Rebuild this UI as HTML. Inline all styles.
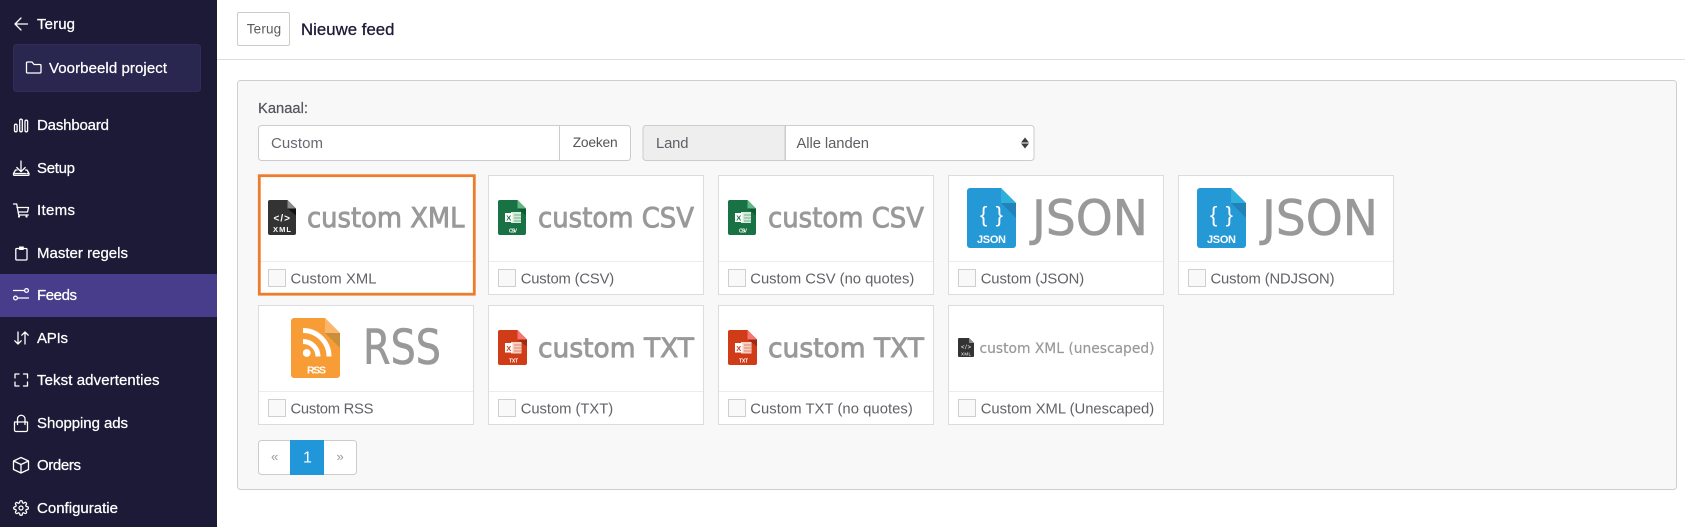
<!DOCTYPE html>
<html lang="nl">
<head>
<meta charset="utf-8">
<title>Nieuwe feed</title>
<style>
html,body{margin:0;padding:0;width:1685px;height:527px;overflow:hidden;background:#fff}
svg{display:block;font-family:"Liberation Sans",sans-serif}
.nav{font-size:15px;fill:#fff;stroke:#fff;stroke-width:.25}
.ic{fill:none;stroke:#fff;stroke-width:1.3;stroke-linecap:round;stroke-linejoin:round}
.lbl{font-size:14.8px;fill:#626268}
.card{fill:#fff;stroke:#dcdcdc;stroke-width:1}
.div{stroke:#ececec;stroke-width:1}
.cb{fill:#f9f9f9;stroke:#cfcfcf;stroke-width:1}
.logo{font-family:"DejaVu Sans",sans-serif;fill:#999;stroke:#999;stroke-width:.85}
.big{font-family:"DejaVu Sans",sans-serif;fill:#999;stroke:#999;stroke-width:.6}
.sm{font-family:"DejaVu Sans",sans-serif;fill:#999;stroke:#999;stroke-width:.2}
.w{fill:#fff;font-weight:bold}
</style>
</head>
<body>
<svg width="1685" height="527" viewBox="0 0 1685 527" xmlns="http://www.w3.org/2000/svg">
<rect width="1685" height="527" fill="#fff"/>

<!-- sidebar -->
<rect width="217" height="527" fill="#1c1a37"/>
<rect x="13.5" y="44.5" width="187" height="47" rx="3" fill="#29264f" stroke="#2f2c59"/>
<rect y="274" width="217" height="43" fill="#483d8b"/>

<path class="ic" d="M27.5 24H15M21 18l-6 6 6 6"/>
<text class="nav" x="37" y="29" textLength="38">Terug</text>
<path class="ic" d="M26.5 63a1 1 0 0 1 1-1h4.5l2 2.5h6a1 1 0 0 1 1 1V72a1 1 0 0 1-1 1h-12.500a1 1 0 0 1-1-1z"/>
<text class="nav" x="49" y="73" textLength="118">Voorbeeld project</text>

<path class="ic" d="M14.500 125.500a1.300 1.300 0 0 1 2.600 0v5a1.300 1.300 0 0 1-2.600 0zM19.700 120.500a1.300 1.300 0 0 1 2.600 0v10a1.300 1.300 0 0 1-2.600 0zM25 121.500a1.300 1.300 0 0 1 2.600 0v9a1.300 1.300 0 0 1-2.600 0z"/>
<text class="nav" x="37" y="130" textLength="72">Dashboard</text>

<path class="ic" d="M21 161v10.500M16.800 167.500l4.200 4.200 4.200-4.200M17 170h-1.500l-2 3.500v1a.8.8 0 0 0 .8.8h13.900a.8.8 0 0 0 .8-.8v-1l-2-3.500H25.500M14 173.500h11.500M27 173.500h1"/>
<text class="nav" x="37" y="173" textLength="38">Setup</text>

<path class="ic" d="M13.500 204h3.200l2 11h9.500M17 207.500h11.500l-1 4.500H18"/>
<circle cx="19" cy="216.500" r="1.100" fill="#fff"/><circle cx="26.500" cy="216.500" r="1.100" fill="#fff"/>
<text class="nav" x="37" y="215" textLength="38">Items</text>

<path class="ic" d="M19 248.500h-2.200a1 1 0 0 0-1 1V259a1 1 0 0 0 1 1H26a1 1 0 0 0 1-1v-9.500a1 1 0 0 0-1-1h-2.200"/>
<rect x="19" y="246.500" width="4.800" height="3.500" rx=".5" fill="#fff"/>
<text class="nav" x="37" y="258" textLength="91">Master regels</text>

<path class="ic" d="M13.500 290.500h10.500M18 298h10.500"/>
<circle class="ic" cx="26.500" cy="290.500" r="1.900"/><circle class="ic" cx="15.500" cy="298" r="1.900"/>
<text class="nav" x="37" y="300" textLength="40">Feeds</text>

<path class="ic" d="M18 332v12M14.800 340.800l3.200 3.200 3.200-3.200M25 344v-12M21.800 335.200l3.200-3.200 3.200 3.200"/>
<text class="nav" x="37" y="343" textLength="31">APIs</text>

<path class="ic" stroke-linecap="butt" d="M15 378v-4h4M23.500 374h4v4M27.500 382v4h-4M19 386h-4v-4"/>
<text class="nav" x="37" y="385" textLength="122.500">Tekst advertenties</text>

<path class="ic" d="M15 422h12.500v8a1.500 1.500 0 0 1-1.500 1.500H16a1.500 1.500 0 0 1-1.500-1.500v-8M17.500 424.500V419a3.700 3.700 0 0 1 7.500 0v5.500"/>
<text class="nav" x="37" y="428" textLength="91">Shopping ads</text>

<path class="ic" d="M21 457.500l7.500 3.500v8.500l-7.500 3.500-7.500-3.500V461zM13.500 461l7.500 3.500 7.500-3.500M21 464.500V473"/>
<text class="nav" x="37" y="470" textLength="44">Orders</text>

<g transform="translate(13 500) scale(.667)" fill="none" stroke="#fff" stroke-width="1.900" stroke-linecap="round" stroke-linejoin="round">
<circle cx="12" cy="12" r="3"/>
<path d="M19.400 15a1.650 1.650 0 0 0 .33 1.820l.06.06a2 2 0 0 1 0 2.830 2 2 0 0 1-2.830 0l-.06-.06a1.650 1.650 0 0 0-1.820-.33 1.650 1.650 0 0 0-1 1.510V21a2 2 0 0 1-2 2 2 2 0 0 1-2-2v-.09A1.650 1.650 0 0 0 9 19.400a1.650 1.650 0 0 0-1.820.33l-.06.06a2 2 0 0 1-2.830 0 2 2 0 0 1 0-2.830l.06-.06a1.650 1.650 0 0 0 .33-1.820 1.650 1.650 0 0 0-1.510-1H3a2 2 0 0 1-2-2 2 2 0 0 1 2-2h.09A1.650 1.650 0 0 0 4.600 9a1.650 1.650 0 0 0-.33-1.820l-.06-.06a2 2 0 0 1 0-2.830 2 2 0 0 1 2.830 0l.06.06a1.650 1.650 0 0 0 1.820.33H9a1.650 1.650 0 0 0 1-1.510V3a2 2 0 0 1 2-2 2 2 0 0 1 2 2v.09a1.650 1.650 0 0 0 1 1.510 1.650 1.650 0 0 0 1.820-.33l.06-.06a2 2 0 0 1 2.830 0 2 2 0 0 1 0 2.830l-.06.06a1.650 1.650 0 0 0-.33 1.820V9a1.650 1.650 0 0 0 1.510 1H21a2 2 0 0 1 2 2 2 2 0 0 1-2 2h-.09a1.650 1.650 0 0 0-1.510 1z"/>
</g>
<text class="nav" x="37" y="513" textLength="81">Configuratie</text>

<!-- header -->
<rect x="217" y="59" width="1468" height="1" fill="#dedede"/>
<rect x="237.500" y="12.500" width="52" height="33" rx="1.500" fill="#fff" stroke="#ccc"/>
<text x="246.700" y="33.500" font-size="13.500" fill="#5b5b5b" textLength="34.500">Terug</text>
<text x="301" y="35" font-size="16.800" fill="#1c1a37" stroke="#1c1a37" stroke-width=".3" textLength="93.500">Nieuwe feed</text>

<!-- panel -->
<rect x="237.500" y="80.500" width="1439" height="409" rx="3" fill="#f8f8f8" stroke="#cfcfcf"/>
<text x="258" y="113" font-size="14.700" fill="#55555c" stroke="#55555c" stroke-width=".25" textLength="50">Kanaal:</text>

<rect x="258.500" y="125.500" width="372" height="35" rx="3" fill="#fff" stroke="#ccc"/>
<rect x="559" y="126" width="1" height="34" fill="#ccc"/>
<text x="271" y="148" font-size="15" fill="#666a70" textLength="52">Custom</text>
<text x="572.700" y="147" font-size="13.800" fill="#555" textLength="45">Zoeken</text>

<path d="M785 125.500H646a3 3 0 0 0-3 3v29a3 3 0 0 0 3 3h139z" fill="#eee" stroke="#ccc"/>
<path d="M785.500 125.500H1031a3 3 0 0 1 3 3v29a3 3 0 0 1-3 3H785.500z" fill="#fff" stroke="#ccc"/>
<text x="656" y="148" font-size="14.800" fill="#5e5e64" textLength="32.500">Land</text>
<text x="796.500" y="148" font-size="14.800" fill="#5e5e64" textLength="72.500">Alle landen</text>
<path d="M1025 137.500l4 5h-8zM1021 143.500h8l-4 5z" fill="#3c3c3c"/>

<!-- cards row 1 -->
<rect class="card" x="258.500" y="175.500" width="216" height="119"/>
<path class="div" d="M259 261.500h215"/>
<rect class="card" x="488.500" y="175.500" width="215" height="119"/><path class="div" d="M489 261.500h214"/>
<rect class="card" x="718.500" y="175.500" width="215" height="119"/><path class="div" d="M719 261.500h214"/>
<rect class="card" x="948.500" y="175.500" width="215" height="119"/><path class="div" d="M949 261.500h214"/>
<rect class="card" x="1178.500" y="175.500" width="215" height="119"/><path class="div" d="M1179 261.500h214"/>

<rect class="cb" x="268.500" y="269.500" width="17" height="17"/>
<rect class="cb" x="498.500" y="269.500" width="17" height="17"/>
<rect class="cb" x="728.500" y="269.500" width="17" height="17"/>
<rect class="cb" x="958.500" y="269.500" width="17" height="17"/>
<rect class="cb" x="1188.500" y="269.500" width="17" height="17"/>

<text class="lbl" x="290.500" y="283.500" textLength="86">Custom XML</text>
<text class="lbl" x="520.700" y="283.500" textLength="93.500">Custom (CSV)</text>
<text class="lbl" x="750.300" y="283.500" textLength="164">Custom CSV (no quotes)</text>
<text class="lbl" x="980.700" y="283.500" textLength="103.500">Custom (JSON)</text>
<text class="lbl" x="1210.500" y="283.500" textLength="124">Custom (NDJSON)</text>

<!-- cards row 2 -->
<rect class="card" x="258.500" y="305.500" width="215" height="119"/><path class="div" d="M259 391.500h214"/>
<rect class="card" x="488.500" y="305.500" width="215" height="119"/><path class="div" d="M489 391.500h214"/>
<rect class="card" x="718.500" y="305.500" width="215" height="119"/><path class="div" d="M719 391.500h214"/>
<rect class="card" x="948.500" y="305.500" width="215" height="119"/><path class="div" d="M949 391.500h214"/>

<rect class="cb" x="268.500" y="399.500" width="17" height="17"/>
<rect class="cb" x="498.500" y="399.500" width="17" height="17"/>
<rect class="cb" x="728.500" y="399.500" width="17" height="17"/>
<rect class="cb" x="958.500" y="399.500" width="17" height="17"/>

<text class="lbl" x="290.500" y="413.500" textLength="83">Custom RSS</text>
<text class="lbl" x="520.700" y="413.500" textLength="92.500">Custom (TXT)</text>
<text class="lbl" x="750.300" y="413.500" textLength="162.500">Custom TXT (no quotes)</text>
<text class="lbl" x="980.700" y="413.500" textLength="173.500">Custom XML (Unescaped)</text>

<!-- selected outline -->
<rect x="259.300" y="175.700" width="215" height="118.500" fill="none" stroke="#ec7d2c" stroke-width="2.800"/>

<!-- custom XML -->
<path d="M270 200h17.500l8.500 8.500V233a2 2 0 0 1-2 2h-24a2 2 0 0 1-2-2v-31a2 2 0 0 1 2-2z" fill="#333"/>
<path d="M287.500 200l8.500 8.500h-8.500z" fill="#8a8a8a"/><path d="M287.500 208.500h8.500v7z" fill="#111"/>
<text class="w" x="273.500" y="221.500" font-size="10" textLength="16.500">&lt;/&gt;</text>
<text class="w" x="273" y="232" font-size="7.500" textLength="18">XML</text>
<text class="logo" x="307" y="227" font-size="27.500" textLength="157.500" lengthAdjust="spacingAndGlyphs">custom XML</text>

<!-- custom CSV 1 -->
<path d="M500 200h17.500l8.500 8.500V233a2 2 0 0 1-2 2h-24a2 2 0 0 1-2-2v-31a2 2 0 0 1 2-2z" fill="#197244"/>
<path d="M517.500 200l8.500 8.500h-8.500z" fill="#5fb583"/><path d="M517.500 208.500h8.500v7z" fill="#105a33"/>
<rect x="511" y="212" width="10" height="11" fill="#d6ead9"/><rect x="505" y="213" width="7.500" height="9" fill="#fff"/>
<text x="506.200" y="220.700" font-size="7.500" font-weight="bold" fill="#197244">X</text>
<path d="M514 215h7M514 218h7M514 221h7" stroke="#197244" stroke-width=".6"/>
<text x="509" y="232.500" font-size="5" font-weight="bold" fill="#fff" textLength="8">CSV</text>
<text class="logo" x="538" y="227" font-size="27.500" textLength="156" lengthAdjust="spacingAndGlyphs">custom CSV</text>

<!-- custom CSV 2 -->
<path d="M730 200h17.500l8.500 8.500V233a2 2 0 0 1-2 2h-24a2 2 0 0 1-2-2v-31a2 2 0 0 1 2-2z" fill="#197244"/>
<path d="M747.500 200l8.500 8.500h-8.500z" fill="#5fb583"/><path d="M747.500 208.500h8.500v7z" fill="#105a33"/>
<rect x="741" y="212" width="10" height="11" fill="#d6ead9"/><rect x="735" y="213" width="7.500" height="9" fill="#fff"/>
<text x="736.200" y="220.700" font-size="7.500" font-weight="bold" fill="#197244">X</text>
<path d="M744 215h7M744 218h7M744 221h7" stroke="#197244" stroke-width=".6"/>
<text x="739" y="232.500" font-size="5" font-weight="bold" fill="#fff" textLength="8">CSV</text>
<text class="logo" x="768" y="227" font-size="27.500" textLength="156" lengthAdjust="spacingAndGlyphs">custom CSV</text>

<!-- JSON 1 -->
<path d="M970 188h31l15 15v42a3 3 0 0 1-3 3h-43a3 3 0 0 1-3-3v-54a3 3 0 0 1 3-3z" fill="#2598d6"/>
<path d="M1001 188l15 15h-15z" fill="#2fb0dc"/><path d="M1001 203h15v15z" fill="#2283b9"/>
<text x="980" y="222" font-size="22" fill="#fff" textLength="23">{ }</text>
<text class="w" x="977" y="243" font-size="11" textLength="29">JSON</text>
<text class="big" x="1032" y="235" font-size="49" textLength="116" lengthAdjust="spacingAndGlyphs">JSON</text>

<!-- JSON 2 -->
<path d="M1200 188h31l15 15v42a3 3 0 0 1-3 3h-43a3 3 0 0 1-3-3v-54a3 3 0 0 1 3-3z" fill="#2598d6"/>
<path d="M1231 188l15 15h-15z" fill="#2fb0dc"/><path d="M1231 203h15v15z" fill="#2283b9"/>
<text x="1210" y="222" font-size="22" fill="#fff" textLength="23">{ }</text>
<text class="w" x="1207" y="243" font-size="11" textLength="29">JSON</text>
<text class="big" x="1262" y="235" font-size="49" textLength="116" lengthAdjust="spacingAndGlyphs">JSON</text>

<!-- RSS -->
<path d="M294 318h31l15 15v42a3 3 0 0 1-3 3h-43a3 3 0 0 1-3-3v-54a3 3 0 0 1 3-3z" fill="#f89c35"/>
<path d="M325 318l15 15h-15z" fill="#fbb56c"/><path d="M325 333h15v15z" fill="#c98f3a"/>
<circle cx="306.700" cy="353" r="3.900" fill="#fff"/>
<path d="M303 341.500a15 15 0 0 1 15 15" fill="none" stroke="#fff" stroke-width="5"/>
<path d="M303 330.500a26 26 0 0 1 26 26" fill="none" stroke="#fff" stroke-width="5"/>
<text class="w" x="307" y="373.500" font-size="10.500" textLength="19">RSS</text>
<text class="big" x="363" y="364" font-size="48" stroke-width="1" textLength="78" lengthAdjust="spacingAndGlyphs">RSS</text>

<!-- custom TXT 1 -->
<path d="M500 330h17.500l9.500 9.500V363a2 2 0 0 1-2 2h-25a2 2 0 0 1-2-2v-31a2 2 0 0 1 2-2z" fill="#cf3c17"/>
<path d="M517.500 330l9.500 9.500h-9.500z" fill="#f77470"/><path d="M517.500 339.500h9.500v7z" fill="#9e2b10"/>
<rect x="511" y="342" width="10.500" height="11.500" fill="#f4cfc2"/><rect x="505" y="343" width="7.500" height="9.500" fill="#fff"/>
<text x="506.200" y="351" font-size="7.500" font-weight="bold" fill="#cf3c17">X</text>
<path d="M514 345h7M514 348h7M514 351h7" stroke="#cf3c17" stroke-width=".6"/>
<text x="509" y="362.500" font-size="5" font-weight="bold" fill="#fff" textLength="9">TXT</text>
<text class="logo" x="538" y="357" font-size="27" textLength="156" lengthAdjust="spacingAndGlyphs">custom TXT</text>

<!-- custom TXT 2 -->
<path d="M730 330h17.500l9.500 9.500V363a2 2 0 0 1-2 2h-25a2 2 0 0 1-2-2v-31a2 2 0 0 1 2-2z" fill="#cf3c17"/>
<path d="M747.500 330l9.500 9.500h-9.500z" fill="#f77470"/><path d="M747.500 339.500h9.500v7z" fill="#9e2b10"/>
<rect x="741" y="342" width="10.500" height="11.500" fill="#f4cfc2"/><rect x="735" y="343" width="7.500" height="9.500" fill="#fff"/>
<text x="736.200" y="351" font-size="7.500" font-weight="bold" fill="#cf3c17">X</text>
<path d="M744 345h7M744 348h7M744 351h7" stroke="#cf3c17" stroke-width=".6"/>
<text x="739" y="362.500" font-size="5" font-weight="bold" fill="#fff" textLength="9">TXT</text>
<text class="logo" x="768" y="357" font-size="27" textLength="156" lengthAdjust="spacingAndGlyphs">custom TXT</text>

<!-- custom XML unescaped -->
<path d="M959 338h10l5 5v13a1 1 0 0 1-1 1h-14a1 1 0 0 1-1-1v-17a1 1 0 0 1 1-1z" fill="#333"/>
<path d="M969 338l5 5h-5z" fill="#8a8a8a"/>
<text x="961" y="349" font-size="6" fill="#fff" textLength="10">&lt;/&gt;</text>
<text x="961" y="355.500" font-size="4.500" fill="#fff" textLength="10">XML</text>
<text class="sm" x="979.500" y="352.800" font-size="14" textLength="175" lengthAdjust="spacingAndGlyphs">custom XML (unescaped)</text>

<!-- pagination -->
<rect x="258.500" y="440.500" width="98" height="34" rx="3" fill="#fff" stroke="#ccc"/>
<rect x="290" y="440" width="34" height="35" fill="#2196d9"/>
<text x="271" y="461" font-size="13" fill="#9a9a9a">«</text>
<text x="303" y="462.500" font-size="16" fill="#fff">1</text>
<text x="336.500" y="461" font-size="13" fill="#9a9a9a">»</text>
</svg>
</body>
</html>
